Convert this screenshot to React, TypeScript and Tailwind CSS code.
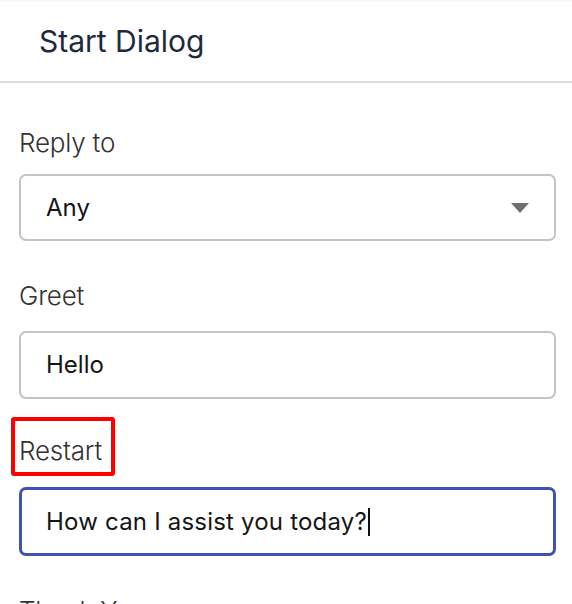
export default function App() {
  return (
    <div className="w-[572px] h-[604px] overflow-hidden bg-white font-['Inter',sans-serif]">
      {/* Header */}
      <div className="border-t-2 border-[#f7f7f7] border-b-2 border-b-[#dddddd] h-[83px] flex items-center pl-[39px]">
        <h1 className="text-[30px] font-normal text-[#1e2a3b] leading-none pb-[2px]">Start Dialog</h1>
      </div>

      <div className="px-[19px] pr-[16px]">
        {/* Reply to */}
        <label className="block mt-[44px] text-[26px] leading-[32px] font-light text-[#333] tracking-[-0.2px]">
          Reply to
        </label>
        <div className="mt-[15px] h-[67px] border-2 border-[#c4c4c4] rounded-[7px] flex items-center justify-between pl-[25px] pr-[25px]">
          <span className="text-[24px] text-[#151515]">Any</span>
          <svg width="18" height="10" viewBox="0 0 18 10">
            <path d="M0 0 L18 0 L9 10 Z" fill="#707070" />
          </svg>
        </div>

        {/* Greet */}
        <label className="block mt-[39px] text-[26px] leading-[32px] font-light text-[#333] tracking-[-0.2px]">
          Greet
        </label>
        <div className="mt-[19px] h-[68px] border-2 border-[#c4c4c4] rounded-[7px] flex items-center pl-[25px]">
          <span className="text-[24px] text-[#151515]">Hello</span>
        </div>

        {/* Restart (highlighted) */}
        <div className="mt-[18px] -ml-[8px] w-[104px] h-[59px] border-[4px] border-[#ff0000] rounded-[3px] flex items-center pl-[4px] pt-[9px]">
          <label className="text-[26px] leading-[32px] font-light text-[#333] tracking-[-0.2px]">Restart</label>
        </div>
        <div className="mt-[11px] h-[69px] border-[3px] border-[#3f51b5] rounded-[7px] flex items-center pl-[24px]">
          <span className="text-[24px] text-[#151515] tracking-[0.2px]">How can I assist you today?</span>
          <span className="ml-[1px] w-[2px] h-[28px] bg-[#111]" />
        </div>

        {/* Thank You */}
        <label className="block mt-[39px] text-[26px] leading-[32px] font-light text-[#333] tracking-[-0.2px]">
          Thank You
        </label>
      </div>
    </div>
  );
}
